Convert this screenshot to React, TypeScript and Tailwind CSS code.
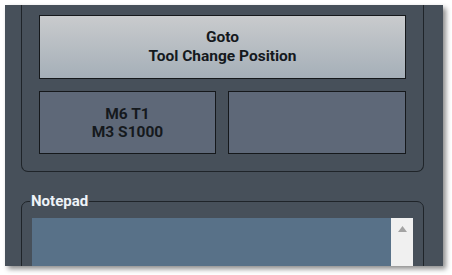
import React from 'react'

const font = { fontFamily: 'Roboto, "Liberation Sans", sans-serif' }

export default function App() {
  return (
    <div className="w-[452px] h-[275px] bg-white overflow-hidden" style={font}>
      <div className="ml-[5px] mt-[5px] w-[438px] h-[261px] bg-[#47505a] overflow-hidden shadow-[3px_3px_5px_rgba(0,0,0,0.45)]">
        <div className="pl-[16px] pr-[19px]">
          {/* Tool group box */}
          <div className="border border-t-0 border-[#1f2429] rounded-b-[7px] px-[17px] pt-[10px] pb-[17px] flex flex-col gap-[12px]">
            <button className="h-[64px] w-full border border-[#15181b] bg-gradient-to-b from-[#c9cbcd] to-[#a5afb8] text-[15.5px] font-bold leading-[19px] text-[#15191d] flex flex-col items-center justify-center">
              <span>Goto</span>
              <span>Tool Change Position</span>
            </button>
            <div className="flex gap-[12px]">
              <button className="h-[63px] w-[177px] border border-[#15181b] bg-[#5e6878] text-[15.5px] font-bold leading-[18px] text-[#15191d] flex flex-col items-center justify-center">
                <span>M6 T1</span>
                <span>M3 S1000</span>
              </button>
              <button className="h-[63px] flex-1 border border-[#15181b] bg-[#5e6878]" />
            </div>
          </div>

          {/* Notepad group box */}
          <div className="relative mt-[29px] border border-[#1f2429] rounded-t-[7px] px-[10px] pt-[16px] h-[80px]">
            <span className="absolute left-[8px] top-[-11px] px-[1px] bg-[#47505a] text-[15px] font-bold leading-[20px] text-[#eef3f8]">
              Notepad
            </span>
            <div className="flex h-full">
              <div className="flex-1 bg-[#587188]" />
              <div className="w-[22px] bg-[#f0f0f0] flex justify-center pt-[8px]">
                <svg width="9" height="6" viewBox="0 0 9 6">
                  <path d="M4.5 0 L9 6 L0 6 Z" fill="#a3a3a3" />
                </svg>
              </div>
            </div>
          </div>
        </div>
      </div>
    </div>
  )
}
